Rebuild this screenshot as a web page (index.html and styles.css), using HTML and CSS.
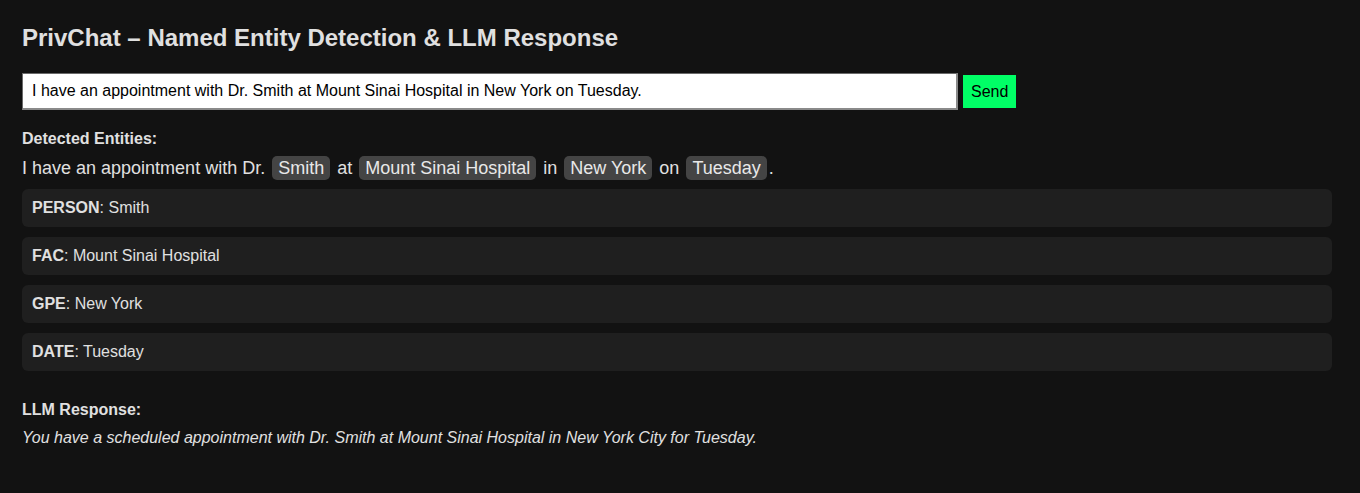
FILE: index.html
```html
<!DOCTYPE html>
<html lang="en">
<head>
<meta charset="utf-8">
<title>PrivChat</title>
<link rel="stylesheet" href="styles.css">
</head>
<body>
<main class="app">
  <h2 class="title">PrivChat – Named Entity Detection &amp; LLM Response</h2>
  <form class="chat-form" onsubmit="return false;">
    <input class="chat-input" type="text" value="I have an appointment with Dr. Smith at Mount Sinai Hospital in New York on Tuesday.">
    <button class="send-btn" type="submit">Send</button>
  </form>
  <div class="section-label">Detected Entities:</div>
  <p class="highlighted">I have an appointment with Dr. <span class="chip">Smith</span> at <span class="chip">Mount Sinai Hospital</span> in <span class="chip">New York</span> on <span class="chip">Tuesday</span>.</p>
  <div class="entity-list">
    <div class="entity-card"><strong>PERSON</strong>: Smith</div>
    <div class="entity-card"><strong>FAC</strong>: Mount Sinai Hospital</div>
    <div class="entity-card"><strong>GPE</strong>: New York</div>
    <div class="entity-card"><strong>DATE</strong>: Tuesday</div>
  </div>
  <div class="section-label llm-label">LLM Response:</div>
  <p class="llm-response">You have a scheduled appointment with Dr. Smith at Mount Sinai Hospital in New York City for Tuesday.</p>
</main>
</body>
</html>
```
FILE: styles.css
```css
html, body {
  margin: 0;
  padding: 0;
  background: #121212;
}
body {
  font-family: "Liberation Sans", Arial, sans-serif;
  color: #e0e0e0;
}
.app {
  padding: 24px 28px 20px 22px;
}
.title {
  margin: 0;
  font-size: 24px;
  font-weight: bold;
  line-height: 28px;
  color: #e0e0e0;
}
.chat-form {
  display: flex;
  align-items: center;
  gap: 5px;
  margin-top: 21px;
}
.chat-input {
  box-sizing: border-box;
  width: 936px;
  height: 37px;
  padding: 0 9px;
  font-family: "Liberation Sans", Arial, sans-serif;
  font-size: 16px;
  color: #000;
  background: #fff;
  border-style: solid;
  border-width: 1px 2px 2px 1px;
  border-color: #6a6a6a #8a8a8a #8a8a8a #6a6a6a;
}
.send-btn {
  box-sizing: border-box;
  height: 33px;
  padding: 0 8px;
  font-family: "Liberation Sans", Arial, sans-serif;
  font-size: 16px;
  color: #000;
  background: #00ff66;
  border: none;
}
.section-label {
  margin-top: 20px;
  font-size: 16px;
  font-weight: bold;
  line-height: 18px;
}
.highlighted {
  margin: 8px 0 0;
  font-size: 18px;
  line-height: 24px;
}
.chip {
  display: inline-block;
  background: #444;
  color: #e8e8e8;
  border-radius: 5px;
  padding: 0 6px;
  margin: 0 2px;
  line-height: 24px;
}
.entity-list {
  display: flex;
  flex-direction: column;
  gap: 10px;
  margin-top: 9px;
}
.entity-card {
  background: #1f1f1f;
  border-radius: 6px;
  padding: 10px;
  font-size: 16px;
  line-height: 18px;
}
.llm-label {
  margin-top: 30px;
}
.llm-response {
  margin: 10px 0 0;
  font-size: 16px;
  line-height: 18px;
  font-style: italic;
}
```
